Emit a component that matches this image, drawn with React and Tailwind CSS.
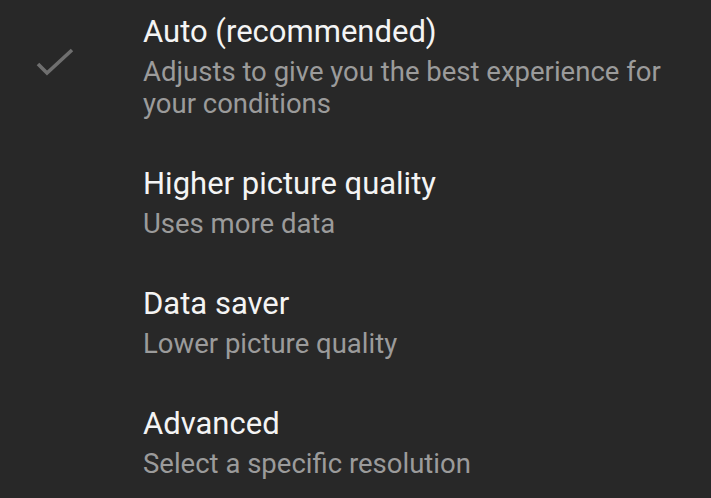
import React from "react";

const options = [
  {
    title: "Auto (recommended)",
    subtitle: "Adjusts to give you the best experience for your conditions",
    selected: true,
  },
  { title: "Higher picture quality", subtitle: "Uses more data" },
  { title: "Data saver", subtitle: "Lower picture quality" },
  { title: "Advanced", subtitle: "Select a specific resolution" },
];

const Check = () => (
  <svg width="48" height="48" viewBox="0 0 48 48" className="mt-[24px] ml-[30px]">
    <polyline
      points="8,28 17,37 42,14"
      fill="none"
      stroke="#6f6f6f"
      strokeWidth="3.6"
    />
  </svg>
);

export default function App() {
  return (
    <div
      className="w-[711px] h-[498px] overflow-hidden bg-[#282828]"
      style={{ fontFamily: "Roboto, 'Noto Sans', sans-serif" }}
    >
      {options.map((opt) => (
        <div key={opt.title} className="flex pt-[12px] pb-[32px]">
          {/* check column */}
          <div className="w-[143px] shrink-0">{opt.selected && <Check />}</div>
          <div className="pr-[40px]">
            <div className="text-[31px] leading-[40px] text-[#f4f4f4]">{opt.title}</div>
            <div className="mt-[4px] text-[27.5px] leading-[32px] text-[#9b9b9b]">
              {opt.subtitle}
            </div>
          </div>
        </div>
      ))}
    </div>
  );
}
